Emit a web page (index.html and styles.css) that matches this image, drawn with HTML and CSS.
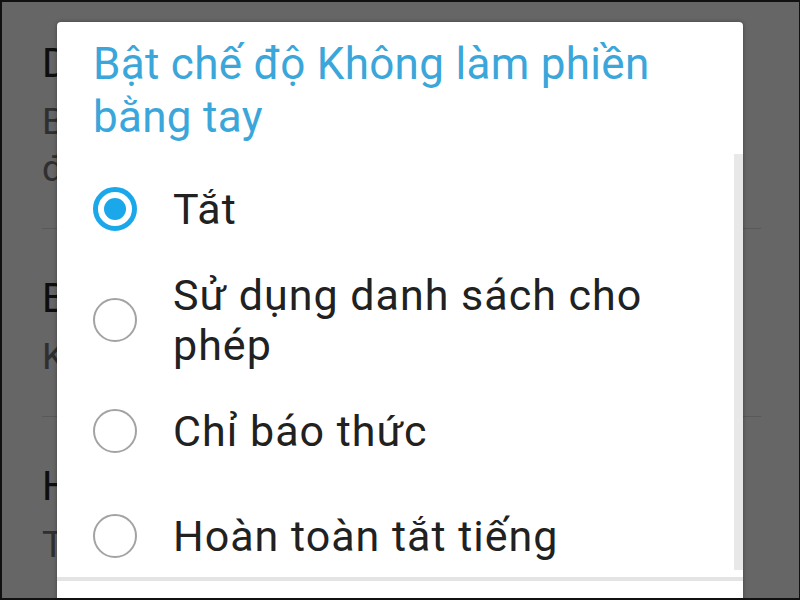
FILE: index.html
```html
<!DOCTYPE html>
<html lang="vi">
<head>
    <meta charset="UTF-8">
    <meta name="viewport" content="width=device-width, initial-scale=1.0">
    <title>Không làm phiền</title>
    <link rel="stylesheet" href="styles.css">
</head>
<body>
    <div class="screen">
        <!-- settings list behind the dim overlay -->
        <div class="settings">
            <div class="setting">
                <div class="setting-title">Dừng theo lịch</div>
                <div class="setting-sub">Bật chế độ Không làm phiền vào<br>đêm và cuối tuần</div>
            </div>
            <div class="setting">
                <div class="setting-title">Bật chế độ Không làm phiền</div>
                <div class="setting-sub">Không</div>
            </div>
            <div class="setting last">
                <div class="setting-title">Hạn chế thông báo</div>
                <div class="setting-sub">Tắt</div>
            </div>
        </div>

        <div class="dialog">
            <h2 class="dialog-title">Bật chế độ Không làm phiền bằng tay</h2>
            <div class="options">
                <div class="option">
                    <span class="radio checked"></span>
                    <span class="option-label">Tắt</span>
                </div>
                <div class="option">
                    <span class="radio"></span>
                    <span class="option-label">Sử dụng danh sách cho phép</span>
                </div>
                <div class="option">
                    <span class="radio"></span>
                    <span class="option-label">Chỉ báo thức</span>
                </div>
                <div class="option">
                    <span class="radio"></span>
                    <span class="option-label">Hoàn toàn tắt tiếng</span>
                </div>
            </div>
            <div class="dialog-buttons"></div>
        </div>
    </div>
</body>
</html>
```

FILE: styles.css
```css
body {
    margin: 0;
    font-family: Roboto, "Noto Sans", sans-serif;
}
.screen {
    width: 800px;
    height: 600px;
    box-sizing: border-box;
    border: 2px solid #111;
    border-right-width: 1px;
    background-color: #666;
    position: relative;
    overflow: hidden;
}

/* background page (dimmed) */
.settings {
    margin-top: -8px;
    padding: 0 38px 0 40px;
}
.setting {
    padding: 46px 0 36px;
    border-bottom: 1px solid #595959;
}
.setting.last {
    border-bottom: none;
}
.setting-title {
    font-size: 40px;
    line-height: 48px;
    color: #0e0e0e;
    white-space: nowrap;
}
.setting-sub {
    margin-top: 10px;
    font-size: 37px;
    line-height: 47px;
    color: #2f2f2f;
    white-space: nowrap;
}

/* dialog */
.dialog {
    position: absolute;
    top: 20px;
    left: 55px;
    width: 686px;
    height: 620px;
    background-color: #fff;
    border-radius: 4px 4px 0 0;
    box-shadow: 0 0 4px rgba(0,0,0,0.35);
    display: flex;
    flex-direction: column;
}
.dialog-title {
    margin: 0;
    padding: 16px 36px 0;
    font-size: 44px;
    font-weight: normal;
    line-height: 53px;
    letter-spacing: 0.3px;
    color: #3ba6da;
}
.options {
    position: relative;
    margin-top: 10px;
    height: 416px;
    box-sizing: border-box;
    padding: 12px 36px 0;
}
/* scrollbar thumb */
.options::after {
    content: "";
    position: absolute;
    top: 0;
    right: 0;
    width: 9px;
    height: 100%;
    background-color: #e8e8e8;
}
.option {
    display: flex;
    align-items: center;
    gap: 36px;
    padding: 18px 0;
}
.option:last-child {
    margin-top: 19px;
}
.radio {
    flex: none;
    width: 44px;
    height: 44px;
    box-sizing: border-box;
    border: 2px solid #a3a3a3;
    border-radius: 50%;
    display: flex;
    align-items: center;
    justify-content: center;
}
.radio.checked {
    border: 5px solid #1aa8ea;
}
.radio.checked::before {
    content: "";
    width: 22px;
    height: 22px;
    border-radius: 50%;
    background-color: #1aa8ea;
}
.option-label {
    font-size: 43px;
    line-height: 50px;
    letter-spacing: 1px;
    color: #212121;
}
.dialog-buttons {
    margin-top: 7px;
    border-top: 4px solid #e4e4e4;
    flex: 1;
}
```
